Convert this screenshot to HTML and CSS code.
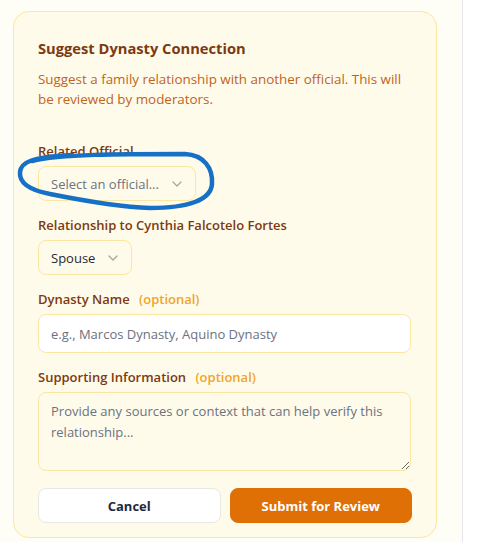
FILE: index.html
```html
<!DOCTYPE html>
<html>
<head>
<meta charset="utf-8">
<link rel="stylesheet" href="styles.css">
</head>
<body>
<div class="page">
  <main class="main">
    <section class="card">
      <h2 class="title">Suggest Dynasty Connection</h2>
      <p class="desc">Suggest a family relationship with another official. This will be reviewed by moderators.</p>

      <div class="field first">
        <label class="label">Related Official</label>
        <div class="select select-official">
          <span class="select-text placeholder">Select an official...</span>
          <svg class="chev" width="10" height="6" viewBox="0 0 10 6"><path d="M1 1l4 4 4-4" fill="none" stroke="#a3a3a3" stroke-width="1.2" stroke-linecap="round" stroke-linejoin="round"/></svg>
        </div>
      </div>

      <div class="field">
        <label class="label">Relationship to Cynthia Falcotelo Fortes</label>
        <div class="select select-rel">
          <span class="select-text">Spouse</span>
          <svg class="chev" width="10" height="6" viewBox="0 0 10 6"><path d="M1 1l4 4 4-4" fill="none" stroke="#a3a3a3" stroke-width="1.2" stroke-linecap="round" stroke-linejoin="round"/></svg>
        </div>
      </div>

      <div class="field">
        <label class="label">Dynasty Name <span class="opt">(optional)</span></label>
        <input class="input" type="text" placeholder="e.g., Marcos Dynasty, Aquino Dynasty">
      </div>

      <div class="field">
        <label class="label">Supporting Information <span class="opt">(optional)</span></label>
        <textarea class="textarea" placeholder="Provide any sources or context that can help verify this relationship..."></textarea>
      </div>

      <div class="actions">
        <button class="btn btn-cancel">Cancel</button>
        <button class="btn btn-submit">Submit for Review</button>
      </div>
    </section>
  </main>
  <aside class="side"></aside>
</div>
<svg class="scribble" width="500" height="542" viewBox="0 0 500 542">
  <path d="M 32 161 C 60 154, 120 154, 185 154 C 204 155, 213 168, 212 184 C 211 200, 188 208, 150 208 C 118 207, 80 200, 50 194 C 29 190, 19 183, 20 172 C 21 162, 32 157, 72 155" fill="none" stroke="#1670c6" stroke-width="4.5" stroke-linecap="round" stroke-linejoin="round"/>
</svg>
</body>
</html>
```

FILE: styles.css
```css
* { box-sizing: border-box; }
html, body { margin: 0; padding: 0; }
body {
  background: #fefdf6;
  font-family: "Open Sans", "Noto Sans", sans-serif;
  width: 500px;
  height: 542px;
  overflow: hidden;
  position: relative;
}
.page {
  display: flex;
  height: 542px;
}
.main {
  width: 462px;
  padding: 11px 25px 0 13px;
}
.side {
  flex: 1;
  background: #ffffff;
  border-left: 1px solid #e4e6ea;
}
.card {
  width: 424px;
  background: #fffbeb;
  border: 1px solid #fbe6a2;
  border-radius: 16px;
  padding: 24px 24px 14px;
}
.title {
  margin: 0;
  font-size: 14.7px;
  line-height: 24px;
  font-weight: 700;
  color: #7c3a10;
}
.desc {
  margin: 9px 0 0;
  font-size: 13.4px;
  line-height: 20px;
  color: #c0641a;
}
.field {
  display: flex;
  flex-direction: column;
  align-items: flex-start;
  margin-top: 15px;
}
.field.first { margin-top: 33px; }
.label {
  font-size: 13px;
  line-height: 18px;
  font-weight: 600;
  color: #7c3a10;
  margin-bottom: 6px;
}
.opt {
  color: #efa52a;
  margin-left: 6px;
}
.select {
  height: 35px;
  display: flex;
  align-items: center;
  justify-content: space-between;
  background: #fffbeb;
  border: 1px solid #fbe6a2;
  border-radius: 8px;
  padding: 0 13px 0 12px;
  font-size: 13px;
}
.select-official { width: 158px; }
.select-rel { width: 94px; }
.select-text { color: #1f2937; }
.select-text.placeholder { color: #6b7280; }
.chev { flex: none; }
.input {
  width: 373px;
  height: 39px;
  background: #ffffff;
  border: 1px solid #fbe6a2;
  border-radius: 8px;
  padding: 0 12px;
  font-family: inherit;
  font-size: 13px;
  color: #1f2937;
  outline: none;
}
.textarea {
  width: 373px;
  height: 79px;
  background: #fffbeb;
  border: 1px solid #fbe6a2;
  border-radius: 8px;
  padding: 8px 12px;
  font-family: inherit;
  font-size: 13px;
  line-height: 21px;
  color: #1f2937;
  resize: vertical;
  outline: none;
}
.input::placeholder, .textarea::placeholder { color: #6b7280; opacity: 1; }
.actions {
  display: flex;
  gap: 9px;
  margin-top: 17px;
}
.btn {
  flex: 1;
  height: 35px;
  border-radius: 8px;
  font-family: inherit;
  font-size: 13px;
  font-weight: 700;
  cursor: pointer;
}
.btn-cancel {
  background: #ffffff;
  border: 1px solid #e8e8e4;
  color: #1e2a44;
}
.btn-submit {
  background: #de7006;
  border: 1px solid #de7006;
  color: #ffffff;
}
.scribble {
  position: absolute;
  left: 0;
  top: 0;
  pointer-events: none;
}
```
